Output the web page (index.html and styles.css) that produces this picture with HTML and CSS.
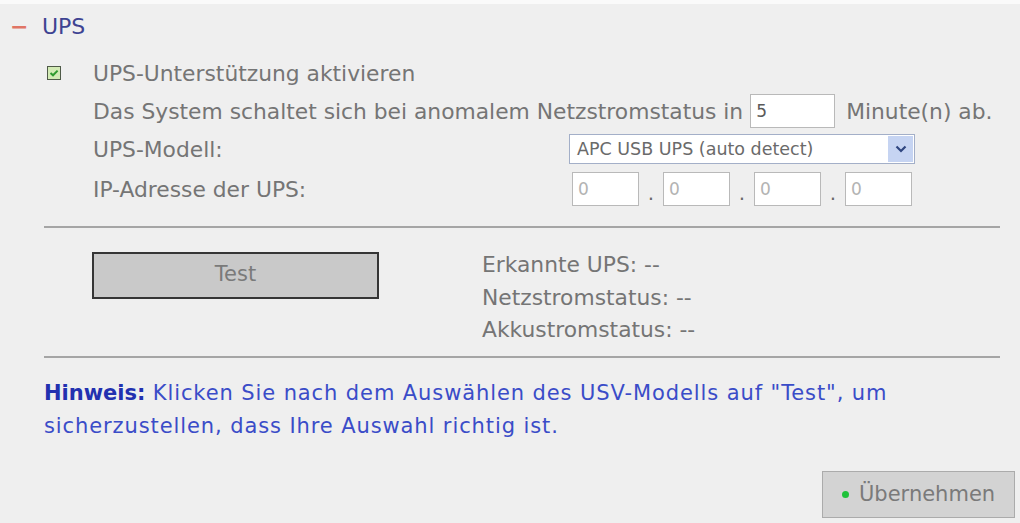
FILE: index.html
```html
<!DOCTYPE html>
<html lang="de">
<head>
<meta charset="utf-8">
<title>UPS</title>
<link rel="stylesheet" href="styles.css">
</head>
<body>
<div class="page">
  <div class="header"><span class="minus">−</span><span class="title">UPS</span></div>

  <div class="form">
    <div class="row row-check">
      <span class="checkbox"><svg width="14" height="14" viewBox="0 0 14 14"><rect x="0.5" y="0.5" width="13" height="13" fill="#d3ebb5" stroke="#4f5a48"/><path d="M3.5 7 L6 9.3 L10.6 4.6" fill="none" stroke="#2f9b2f" stroke-width="2"/></svg></span>
      <span>UPS-Unterstützung aktivieren</span>
    </div>
    <div class="row row-indent">
      <span>Das System schaltet sich bei anomalem Netzstromstatus in</span>
      <span class="box num">5</span>
      <span>Minute(n) ab.</span>
    </div>
    <div class="row field">
      <span class="label">UPS-Modell:</span>
      <div class="select">
        <span class="select-text">APC USB UPS (auto detect)</span>
        <span class="select-arrow"><svg width="12" height="8" viewBox="0 0 12 8"><path d="M1.5 1.5 L6 6 L10.5 1.5" fill="none" stroke="#2f4680" stroke-width="2.2"/></svg></span>
      </div>
    </div>
    <div class="row field row-ip">
      <span class="label">IP-Adresse der UPS:</span>
      <div class="ip">
        <span class="box ipbox">0</span><span class="dot-sep">.</span>
        <span class="box ipbox">0</span><span class="dot-sep">.</span>
        <span class="box ipbox">0</span><span class="dot-sep">.</span>
        <span class="box ipbox">0</span>
      </div>
    </div>
  </div>

  <div class="sep"></div>

  <div class="test-area">
    <button class="test-btn" type="button">Test</button>
    <div class="status">
      <div>Erkannte UPS: --</div>
      <div>Netzstromstatus: --</div>
      <div>Akkustromstatus: --</div>
    </div>
  </div>

  <div class="sep sep2"></div>

  <p class="hint"><b class="hint-label">Hinweis: </b>Klicken Sie nach dem Auswählen des USV-Modells auf "Test", um sicherzustellen, dass Ihre Auswahl richtig ist.</p>

  <div class="actions">
    <button class="apply" type="button"><span class="green-dot"></span>Übernehmen</button>
  </div>
</div>
</body>
</html>
```

FILE: styles.css
```css
html, body {
  margin: 0;
  padding: 0;
}
body {
  background: #efefef;
  font-family: "DejaVu Sans", sans-serif;
  font-size: 21.8px;
  color: #757575;
  width: 1020px;
  height: 523px;
  overflow: hidden;
}
.page {
  border-top: 4px solid #fafafa;
  height: 519px;
}
.header {
  display: flex;
  align-items: center;
  height: 40px;
  margin-top: 2px;
  padding-left: 10px;
}
.minus {
  width: 32px;
  color: #e07565;
  font-size: 22px;
  font-weight: bold;
}
.title {
  color: #3e4392;
  font-size: 22px;
}
.form {
  margin-top: 8px;
}
.row {
  display: flex;
  align-items: center;
  height: 38px;
}
.row-check {
  padding-left: 47px;
  gap: 32px;
}
.checkbox {
  display: flex;
  width: 14px;
  height: 14px;
}
.row-indent {
  padding-left: 93px;
}
.box {
  display: inline-flex;
  align-items: center;
  box-sizing: border-box;
  background: #ffffff;
  border: 1px solid #b9b9b9;
  font-size: 17px;
  padding-left: 5px;
}
.num {
  width: 85px;
  height: 34px;
  margin: 0 11px 0 7px;
  color: #5a5a5a;
}
.field {
  padding-left: 93px;
}
.label {
  width: 476px;
  flex: none;
}
.select {
  display: flex;
  align-items: stretch;
  box-sizing: border-box;
  width: 346px;
  height: 30px;
  background: #ffffff;
  border: 1px solid #a3afc8;
  padding: 1px;
}
.select-text {
  flex: 1;
  display: flex;
  align-items: center;
  padding-left: 6px;
  font-size: 17.5px;
  color: #6a6a6a;
}
.select-arrow {
  width: 25px;
  display: flex;
  align-items: center;
  justify-content: center;
  background: #c6d4f2;
}
.row-ip {
  height: 42px;
}
.ip {
  display: flex;
  align-items: center;
  margin-left: 3px;
}
.ipbox {
  width: 67px;
  height: 34px;
  color: #b3b3b3;
}
.dot-sep {
  width: 24px;
  text-align: center;
  align-self: flex-end;
  line-height: 26px;
  font-size: 20px;
  color: #6a6a6a;
}
.sep {
  margin: 16px 20px 0 44px;
  border-top: 2px solid #a5a5a5;
}
.test-area {
  display: flex;
  align-items: flex-start;
  padding-left: 92px;
  margin-top: 21px;
}
.test-btn {
  box-sizing: border-box;
  width: 287px;
  height: 47px;
  margin-top: 3px;
  background: #c9c9c9;
  border: 2px solid #353535;
  font-family: "DejaVu Sans", sans-serif;
  font-size: 21px;
  color: #7a7a7a;
  padding: 0 0 4px 0;
}
.status {
  margin-left: 103px;
  line-height: 32.5px;
}
.sep2 {
  margin-top: 9px;
}
.hint {
  margin: 19px 0 0 44px;
  width: 956px;
  font-family: "DejaVu Sans", sans-serif;
  font-size: 21px;
  letter-spacing: 0.9px;
  line-height: 33px;
  color: #3a4cc8;
}
.hint-label {
  color: #2231b0;
  letter-spacing: 0;
}
.actions {
  display: flex;
  justify-content: flex-end;
  padding-right: 5px;
  margin-top: 28px;
}
.apply {
  display: flex;
  align-items: center;
  box-sizing: border-box;
  width: 193px;
  height: 47px;
  background: #d3d3d3;
  border: 1px solid #ababab;
  font-family: "DejaVu Sans", sans-serif;
  font-size: 21px;
  color: #7a7a7a;
  padding: 0 0 0 19px;
}
.green-dot {
  width: 7px;
  height: 7px;
  border-radius: 50%;
  background: #1fc23a;
  margin-right: 10px;
}
```
